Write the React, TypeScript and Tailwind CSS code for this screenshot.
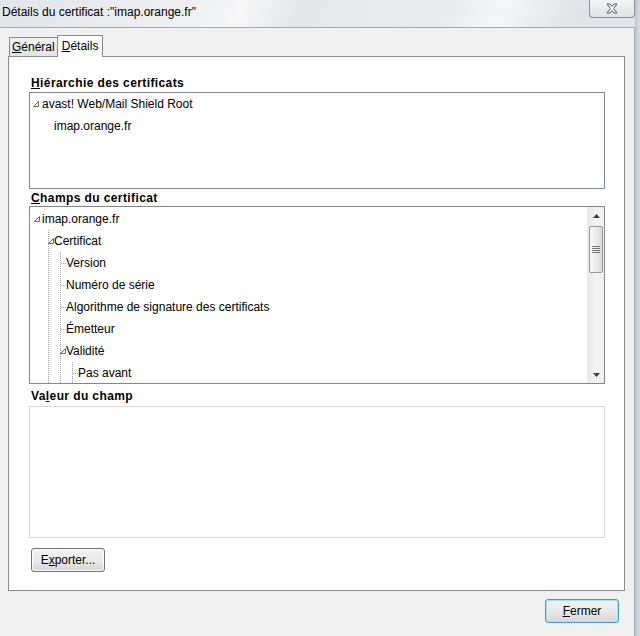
import React from 'react';

type Row = { label: string; level: number; expanded?: boolean };

const fields: Row[] = [
  { label: 'imap.orange.fr', level: 0, expanded: true },
  { label: 'Certificat', level: 1, expanded: true },
  { label: 'Version', level: 2 },
  { label: 'Numéro de série', level: 2 },
  { label: 'Algorithme de signature des certificats', level: 2 },
  { label: 'Émetteur', level: 2 },
  { label: 'Validité', level: 2, expanded: true },
  { label: 'Pas avant', level: 3 },
];

// small "expanded" glyph of the Win7 tree view
const Expander = ({ x }: { x: number }) => (
  <polygon points={`${x + 5.5},8.5 ${x + 5.5},13.5 ${x + 0.5},13.5`} fill="#fff" stroke="#6b6b6b" strokeWidth="1" />
);

const TreeRow = ({ row }: { row: Row }) => {
  const textX = row.level === 0 ? 12 : 12 + 12 * row.level;
  const lines = [];
  for (let d = 1; d <= row.level; d++) {
    const x = 6 + 12 * d + 0.5;
    lines.push(
      <line key={`v${d}`} x1={x} y1={0} x2={x} y2={22} stroke="#a3a3a3" strokeDasharray="1 1" />
    );
  }
  const own = 6 + 12 * row.level;
  return (
    <div className="flex h-[22px] items-center">
      <svg width={textX} height={22} className="shrink-0">
        {lines}
        {row.level > 0 && !row.expanded && (
          <line x1={own + 1} y1={11.5} x2={own + 6} y2={11.5} stroke="#a3a3a3" strokeDasharray="1 1" />
        )}
        {row.expanded && <Expander x={row.level === 0 ? 4 : own} />}
      </svg>
      <span className="whitespace-nowrap">{row.label}</span>
    </div>
  );
};

const Scrollbar = () => (
  <div className="w-[17px] h-full flex flex-col bg-gradient-to-r from-[#e8e8e8] via-[#f4f4f4] to-[#f0f0f0] border-l border-[#ececec]">
    <div className="h-[17px] flex items-center justify-center">
      <svg width="7" height="4"><polygon points="3.5,0 7,4 0,4" fill="#3d3d3d" /></svg>
    </div>
    <div className="flex-1 pt-[2px]">
      <div className="mx-[1px] h-[47px] rounded-[2px] border border-[#9b9b9b] bg-gradient-to-r from-[#f7f7f7] via-[#ececec] to-[#d8d8d8] flex items-center justify-center">
        <svg width="8" height="8">
          <line x1="0" y1="0.5" x2="8" y2="0.5" stroke="#7a7a7a" />
          <line x1="0" y1="2.5" x2="8" y2="2.5" stroke="#7a7a7a" />
          <line x1="0" y1="4.5" x2="8" y2="4.5" stroke="#7a7a7a" />
          <line x1="0" y1="6.5" x2="8" y2="6.5" stroke="#7a7a7a" />
        </svg>
      </div>
    </div>
    <div className="h-[17px] flex items-center justify-center">
      <svg width="7" height="4"><polygon points="0,0 7,0 3.5,4" fill="#3d3d3d" /></svg>
    </div>
  </div>
);

const Button = ({ children, focused }: { children: React.ReactNode; focused?: boolean }) => (
  <button
    className={`w-[74px] h-[24px] rounded-[3px] border text-[12px] text-black bg-gradient-to-b from-[#f2f2f2] via-[#ebebeb] to-[#d6d6d6] ${
      focused ? 'border-[#3c9fdb] shadow-[inset_0_0_0_1px_#a8e0fb]' : 'border-[#707070] shadow-[inset_0_0_0_1px_#fbfbfb]'
    }`}
  >
    {children}
  </button>
);

export default function App() {
  return (
    <div className="w-[640px] h-[636px] flex overflow-hidden bg-[#cfd6de] text-[12px] text-black" style={{ fontFamily: '"Liberation Sans", Arial, sans-serif' }}>
      <div className="w-[635px] flex flex-col">
        {/* title bar */}
        <div className="h-[27px] flex justify-between bg-[linear-gradient(115deg,#e3e6e9_0%,#eef0f2_30%,#f7f7f8_38%,#e6e8eb_46%,#e9ebee_70%,#f5f6f7_78%,#e1e4e8_90%)]">
          <div className="pl-[2px] pt-[4px] leading-[16px]">Détails du certificat :"imap.orange.fr"</div>
          <div className="w-[46px] h-[18px] rounded-b-[4px] border border-t-0 border-[#8d9298] bg-gradient-to-b from-[#f4f4f4] to-[#e0e2e4] flex items-center justify-center">
            <svg width="12" height="11" viewBox="0 0 12 11">
              <path d="M1 1h3l2 2.5L8 1h3L7.6 5.5 11 10H8L6 7.5 4 10H1l3.4-4.5z" fill="#fff" stroke="#4c5561" strokeWidth="1" strokeLinejoin="round" />
            </svg>
          </div>
        </div>

        {/* client area */}
        <div className="flex-1 bg-[#f0f0f0] border-t border-r border-[#a4a9ae] pl-[8px] pt-[7px]">
          <div className="flex items-end h-[21px] pl-[1px]">
            <div className="h-[19px] px-[2px] border border-b-0 border-[#898c95] bg-gradient-to-b from-[#f2f2f2] to-[#e3e3e3] leading-[18px]">
              <span className="underline">G</span>énéral
            </div>
            <div className="relative z-10 -mb-px h-[22px] px-[4px] border border-b-0 border-[#898c95] bg-white leading-[20px] -ml-px">
              <span className="underline">D</span>étails
            </div>
          </div>

          <div className="w-[617px] h-[535px] border border-[#898c95] bg-white pl-[20px] pt-[18px]">
            <div className="pl-[2px] h-[16px] leading-[16px] font-bold tracking-[0.4px]">
              <span className="underline">H</span>iérarchie des certificats
            </div>
            <div className="mt-[1px] w-[576px] h-[97px] border border-[#828790] pl-[3px]">
              <div className="h-[22px] flex items-center">
                <svg width="9" height="22" className="shrink-0"><Expander x={0} /></svg>
                <span>avast! Web/Mail Shield Root</span>
              </div>
              <div className="h-[22px] flex items-center pl-[21px]">imap.orange.fr</div>
            </div>

            <div className="mt-[1px] pl-[2px] h-[16px] leading-[16px] font-bold tracking-[0.4px]">
              <span className="underline">C</span>hamps du certificat
            </div>
            <div className="w-[576px] h-[178px] border border-[#828790] flex">
              <div className="flex-1 overflow-hidden pt-[1px]">
                {fields.map((r) => (
                  <TreeRow key={r.label} row={r} />
                ))}
              </div>
              <Scrollbar />
            </div>

            <div className="mt-[4px] pl-[2px] h-[16px] leading-[16px] font-bold tracking-[0.4px]">
              Va<span className="underline">l</span>eur du champ
            </div>
            <div className="mt-[2px] w-[576px] h-[132px] border border-[#dadada]" />

            <div className="mt-[10px] pl-[2px]">
              <Button>
                E<span className="underline">x</span>porter...
              </Button>
            </div>
          </div>

          <div className="w-[617px] flex justify-end pr-[6px] mt-[8px]">
            <Button focused>
              <span className="underline">F</span>ermer
            </Button>
          </div>
        </div>
      </div>
      <div className="w-[5px] bg-gradient-to-r from-[#bcc5cf] to-[#d7dde3]" />
    </div>
  );
}
